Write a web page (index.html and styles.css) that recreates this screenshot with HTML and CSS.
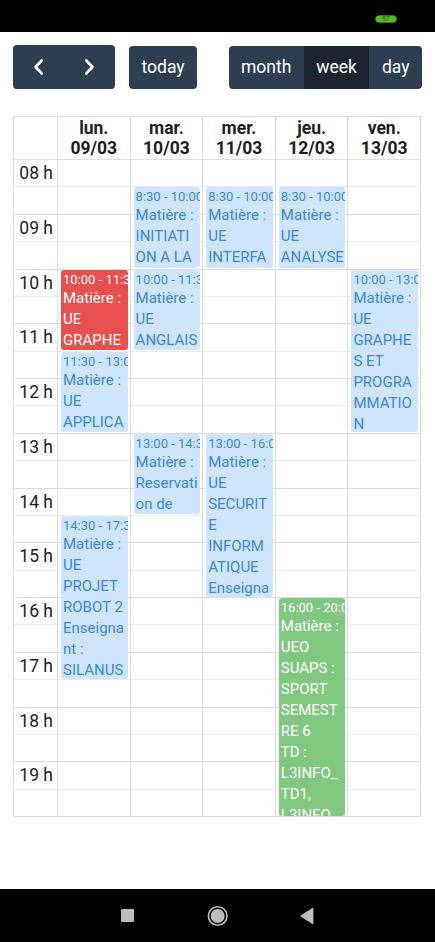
FILE: index.html
```html
<!DOCTYPE html>
<html lang="fr">
<head>
<meta charset="utf-8">
<title>Emploi du temps</title>
<link rel="stylesheet" href="styles.css">
</head>
<body>
<div class="status">
  <svg class="battery" width="22" height="8" viewBox="0 0 22 8"><rect x="0.5" y="0.5" width="21" height="7" rx="3.5" fill="#56b82c" stroke="#3f8f1d" stroke-width="0.6"/><text x="11" y="6.3" font-size="6.5" font-family="Roboto, sans-serif" text-anchor="middle" fill="#24500c">97</text></svg>
</div>

<div class="main">
  <div class="toolbar">
    <div class="tb-left">
      <div class="btn-group nav-group">
        <div class="btn nav"><svg width="11" height="16" viewBox="0 0 11 16"><path d="M8.6 1.6 L2.6 8 L8.6 14.4" fill="none" stroke="#fff" stroke-width="2.8" stroke-linecap="round" stroke-linejoin="round"/></svg></div>
        <div class="btn nav"><svg width="11" height="16" viewBox="0 0 11 16"><path d="M2.4 1.6 L8.4 8 L2.4 14.4" fill="none" stroke="#fff" stroke-width="2.8" stroke-linecap="round" stroke-linejoin="round"/></svg></div>
      </div>
      <div class="btn-group"><div class="btn">today</div></div>
    </div>
    <div class="btn-group">
      <div class="btn">month</div>
      <div class="btn active">week</div>
      <div class="btn">day</div>
    </div>
  </div>

  <div class="cal">
    <div class="cal-head">
      <div class="head-cell"></div>
      <div class="head-cell"><div>lun.</div><div>09/03</div></div>
      <div class="head-cell"><div>mar.</div><div>10/03</div></div>
      <div class="head-cell"><div>mer.</div><div>11/03</div></div>
      <div class="head-cell"><div>jeu.</div><div>12/03</div></div>
      <div class="head-cell"><div>ven.</div><div>13/03</div></div>
    </div>
    <div class="cal-body">
      <div class="lines">
        <div class="slot minor"></div><div class="slot"></div>
        <div class="slot minor"></div><div class="slot"></div>
        <div class="slot minor"></div><div class="slot"></div>
        <div class="slot minor"></div><div class="slot"></div>
        <div class="slot minor"></div><div class="slot"></div>
        <div class="slot minor"></div><div class="slot"></div>
        <div class="slot minor"></div><div class="slot"></div>
        <div class="slot minor"></div><div class="slot"></div>
        <div class="slot minor"></div><div class="slot"></div>
        <div class="slot minor"></div><div class="slot"></div>
        <div class="slot minor"></div><div class="slot"></div>
        <div class="slot minor"></div><div class="slot"></div>
      </div>
      <div class="vcol c1"></div>
      <div class="vcol c2"></div>
      <div class="vcol c3"></div>
      <div class="vcol c4"></div>
      <div class="vcol c5"></div>
      <div class="vcol c6"></div>
      <div class="axis">
        <div class="hour">08 h</div><div class="hour">09 h</div><div class="hour">10 h</div>
        <div class="hour">11 h</div><div class="hour">12 h</div><div class="hour">13 h</div>
        <div class="hour">14 h</div><div class="hour">15 h</div><div class="hour">16 h</div>
        <div class="hour">17 h</div><div class="hour">18 h</div><div class="hour">19 h</div>
      </div>

      <!-- lundi -->
      <div class="ev red" style="grid-column:2; grid-row:5 / 8">
        <div class="t">10:00 - 11:30</div><div>Matière :</div><div>UE</div><div>GRAPHE</div><div>S ET</div>
      </div>
      <div class="ev blue" style="grid-column:2; grid-row:8 / 11">
        <div class="t">11:30 - 13:00</div><div>Matière :</div><div>UE</div><div>APPLICA</div><div>TIONS</div>
      </div>
      <div class="ev blue" style="grid-column:2; grid-row:14 / 20">
        <div class="t">14:30 - 17:30</div><div>Matière :</div><div>UE</div><div>PROJET</div><div>ROBOT 2</div><div>Enseigna</div><div>nt :</div><div>SILANUS</div>
      </div>

      <!-- mardi -->
      <div class="ev blue" style="grid-column:3; grid-row:2 / 5">
        <div class="t">8:30 - 10:00</div><div>Matière :</div><div>INITIATI</div><div>ON A LA</div><div>RECHER</div>
      </div>
      <div class="ev blue" style="grid-column:3; grid-row:5 / 8">
        <div class="t">10:00 - 11:30</div><div>Matière :</div><div>UE</div><div>ANGLAIS</div>
      </div>
      <div class="ev blue" style="grid-column:3; grid-row:11 / 14">
        <div class="t">13:00 - 14:30</div><div>Matière :</div><div>Reservati</div><div>on de</div><div>salle</div>
      </div>

      <!-- mercredi -->
      <div class="ev blue" style="grid-column:4; grid-row:2 / 5">
        <div class="t">8:30 - 10:00</div><div>Matière :</div><div>UE</div><div>INTERFA</div><div>CES</div>
      </div>
      <div class="ev blue" style="grid-column:4; grid-row:11 / 17">
        <div class="t">13:00 - 16:00</div><div>Matière :</div><div>UE</div><div>SECURIT</div><div>E</div><div>INFORM</div><div>ATIQUE</div><div>Enseigna</div><div>nt :</div>
      </div>

      <!-- jeudi -->
      <div class="ev blue" style="grid-column:5; grid-row:2 / 5">
        <div class="t">8:30 - 10:00</div><div>Matière :</div><div>UE</div><div>ANALYSE</div>
      </div>
      <div class="ev green" style="grid-column:5; grid-row:17 / 25">
        <div class="t">16:00 - 20:00</div><div>Matière :</div><div>UEO</div><div>SUAPS :</div><div>SPORT</div><div>SEMEST</div><div>RE 6</div><div>TD :</div><div>L3INFO_</div><div>TD1,</div><div>L3INFO_</div>
      </div>

      <!-- vendredi -->
      <div class="ev blue" style="grid-column:6; grid-row:5 / 11">
        <div class="t">10:00 - 13:00</div><div>Matière :</div><div>UE</div><div>GRAPHE</div><div>S ET</div><div>PROGRA</div><div>MMATIO</div><div>N</div>
      </div>
    </div>
  </div>
</div>

<div class="navbar">
  <svg width="435" height="53" viewBox="0 0 435 53">
    <rect x="121" y="20" width="13" height="13" rx="1" fill="#bdbdbd"/>
    <circle cx="217.7" cy="27" r="9.3" fill="none" stroke="#bdbdbd" stroke-width="1.6"/>
    <circle cx="217.7" cy="27" r="7" fill="#bdbdbd"/>
    <path d="M313 19 L313 35 L300.5 27 Z" fill="#bdbdbd" stroke="#bdbdbd" stroke-width="0.8" stroke-linejoin="round"/>
  </svg>
</div>
</body>
</html>
```

FILE: styles.css
```css
* { box-sizing: border-box; }

html, body {
  margin: 0;
  padding: 0;
}

body {
  height: 942px;
  overflow: hidden;
  display: flex;
  flex-direction: column;
  background: #fff;
  color: #212121;
  font-family: Roboto, "Noto Sans", Arial, sans-serif;
}

/* status bar */
.status {
  height: 32px;
  flex: 0 0 32px;
  background: #000;
  display: flex;
  justify-content: flex-end;
  align-items: flex-start;
  padding: 15px 38px 0 0;
}
.battery { display: block; }

/* main */
.main {
  padding: 13px 13px 0 13px;
}

.toolbar {
  display: flex;
  justify-content: space-between;
  align-items: center;
  height: 44px;
}
.tb-left {
  display: flex;
  align-items: center;
  gap: 14px;
}
.btn-group {
  display: flex;
  border-radius: 4px;
  overflow: hidden;
}
.btn {
  height: 43px;
  padding: 0 12.5px;
  display: flex;
  align-items: center;
  justify-content: center;
  background: #2c3e50;
  color: #fff;
  font-size: 17.5px;
  letter-spacing: 0;
}
.btn.active { background: #1a252f; }
.nav-group .btn.nav {
  width: 51px;
  height: 44px;
  padding: 0;
}
.btn svg { display: block; }

/* calendar */
.cal {
  margin-top: 27px;
  width: 408px;
  border-left: 1px solid #ddd;
  border-top: 1px solid #ddd;
}
.cal-head,
.cal-body {
  display: grid;
  grid-template-columns: 44px repeat(5, 1fr);
}
.head-cell {
  height: 43px;
  border-right: 1px solid #ddd;
  border-bottom: 1px solid #ddd;
  text-align: center;
  font-weight: 700;
  font-size: 17.5px;
  line-height: 20px;
  padding-top: 1px;
  color: #1d1d1d;
}

.cal-body {
  grid-template-rows: repeat(24, 27.375px);
}
.lines {
  grid-column: 1 / -1;
  grid-row: 1 / -1;
  display: flex;
  flex-direction: column;
}
.slot {
  height: 27.375px;
  flex: 0 0 27.375px;
  border-bottom: 1px solid #dcdcdc;
}
.slot.minor { border-bottom-color: #ececec; }

.vcol {
  grid-row: 1 / -1;
  border-right: 1px solid #ddd;
}
.c1 { grid-column: 1; }
.c2 { grid-column: 2; }
.c3 { grid-column: 3; }
.c4 { grid-column: 4; }
.c5 { grid-column: 5; }
.c6 { grid-column: 6; }

.axis {
  grid-column: 1;
  grid-row: 1 / -1;
  display: flex;
  flex-direction: column;
}
.hour {
  height: 54.75px;
  flex: 0 0 54.75px;
  font-size: 17.5px;
  line-height: 27px;
  text-align: right;
  padding-right: 5px;
  color: #1d1d1d;
}

/* events */
.ev {
  margin: 0 3px 1.5px 3px;
  border-radius: 3px;
  overflow: hidden;
  padding: 1px 2px 0 2px;
  font-size: 15px;
  line-height: 21px;
}
.ev div { white-space: nowrap; }
.ev .t {
  font-size: 13px;
  line-height: 17px;
}
.blue { background: #cfe5ff; color: #3a88d8; }
.red { background: #e85050; color: #fff; }
.green { background: #80c87f; color: #fff; }

/* nav bar */
.navbar {
  margin-top: auto;
  height: 53px;
  flex: 0 0 53px;
  background: #000;
}
.navbar svg { display: block; }
```
